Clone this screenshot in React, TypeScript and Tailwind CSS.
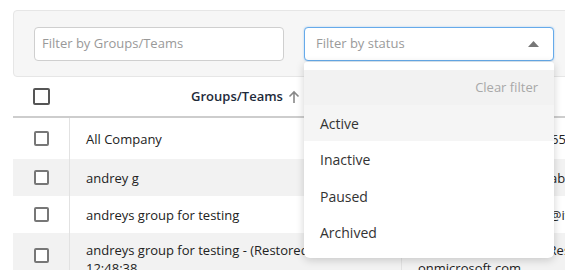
import React from "react";

const font = { fontFamily: '"Open Sans", "Noto Sans", sans-serif' };

function Box({ header = false }: { header?: boolean }) {
  return (
    <div
      className={
        header
          ? "w-[17px] h-[17px] rounded-[2px] border-2 border-[#555] bg-white"
          : "w-[15px] h-[15px] rounded-[2px] border-2 border-[#777] bg-white"
      }
    />
  );
}

const rows = [
  { name: ["All Company"], mail: ["allcompany@contoso.65x.com"], bg: "bg-white", h: "h-[41px]" },
  { name: ["andrey g"], mail: ["andreyg@contoso.onlab"], bg: "bg-[#f2f2f2]", h: "h-[37px]" },
  { name: ["andreys group for testing"], mail: ["andreysgroupstesting@iv.com"], bg: "bg-white", h: "h-[37px]" },
  {
    name: ["andreys group for testing - (Restored) -", "12:48:38"],
    mail: ["andreysgroupfortest_Restored", "onmicrosoft.com"],
    bg: "bg-[#f2f2f2]",
    h: "h-[45px]",
  },
];

export default function App() {
  return (
    <div className="relative w-[565px] h-[270px] overflow-hidden bg-white" style={font}>
      <div className="pt-[10px] pl-[13px]">
        {/* filter panel */}
        <div className="h-[67px] w-[600px] rounded-l-[4px] border border-[#e6e6e6] bg-[#f6f6f6] pl-[20px] pt-[16px] flex gap-[20px]">
          <div className="w-[250px] shrink-0 h-[34px] rounded-[4px] border border-[#cfcfcf] bg-white flex items-center pl-[7px] text-[13px] text-[#999]">
            Filter by Groups/Teams
          </div>
          <div className="w-[250px] shrink-0 h-[34px] rounded-[4px] border border-[#66aaea] bg-white flex items-center pl-[11px] pr-[14px] text-[13px] text-[#9a9a9a] shadow-[0_0_2px_rgba(102,170,234,0.6)]">
            <span className="flex-1">Filter by status</span>
            <svg width="11" height="6" viewBox="0 0 11 6">
              <polygon points="0,6 5.5,0 11,6" fill="#777" />
            </svg>
          </div>
        </div>

        {/* table */}
        <div className="w-[600px]">
          <div className="h-[41px] flex items-center border-b-2 border-[#cdcdcd]">
            <div className="w-[57px] shrink-0 flex justify-center">
              <Box header />
            </div>
            <div className="w-[332px] shrink-0 flex items-center justify-center gap-[4px] pl-[20px] text-[13px] font-semibold text-[#1e2a3a]">
              <span>Groups/Teams</span>
              <svg width="14" height="14" viewBox="0 0 14 14" fill="none" stroke="#888" strokeWidth="1.6">
                <path d="M7 13V2M2.5 6.5L7 2l4.5 4.5" />
              </svg>
            </div>
            <div className="flex-1" />
          </div>
          {rows.map((r, i) => (
            <div key={i} className={`flex ${r.bg} ${r.h} text-[13px] text-[#222]`}>
              <div className="w-[57px] shrink-0 flex items-center justify-center border-r border-[#e2e2e2]">
                <Box />
              </div>
              <div
                className={`w-[332px] shrink-0 border-r border-[#e2e2e2] pl-[16px] leading-[18px] flex flex-col ${
                  r.name.length > 1 ? "pt-[8px]" : "justify-center"
                }`}
              >
                {r.name.map((t) => (
                  <span key={t} className="whitespace-nowrap">{t}</span>
                ))}
              </div>
              <div
                className={`flex-1 min-w-0 overflow-hidden pl-[16px] leading-[18px] flex flex-col ${
                  r.mail.length > 1 ? "pt-[8px]" : "justify-center"
                }`}
              >
                {r.mail.map((t) => (
                  <span key={t} className="whitespace-nowrap">{t}</span>
                ))}
              </div>
            </div>
          ))}
        </div>
      </div>

      {/* dropdown menu */}
      <div className="absolute left-[304px] top-[62px] w-[250px] h-[196px] bg-white rounded-b-[6px] rounded-t-[3px] shadow-[0_2px_8px_rgba(0,0,0,0.18)] pt-[8px] text-[14px] text-[#333]">
        <div className="h-[35px] bg-[#f2f2f2] flex items-center justify-end pr-[16px] text-[13px] text-[#a8a8a8]">
          Clear filter
        </div>
        <div className="h-[36px] bg-[#f5f5f5] flex items-center pl-[16px]">Active</div>
        <div className="h-[37px] flex items-center pl-[16px]">Inactive</div>
        <div className="h-[36px] flex items-center pl-[16px]">Paused</div>
        <div className="h-[37px] flex items-center pl-[16px]">Archived</div>
      </div>
    </div>
  );
}
